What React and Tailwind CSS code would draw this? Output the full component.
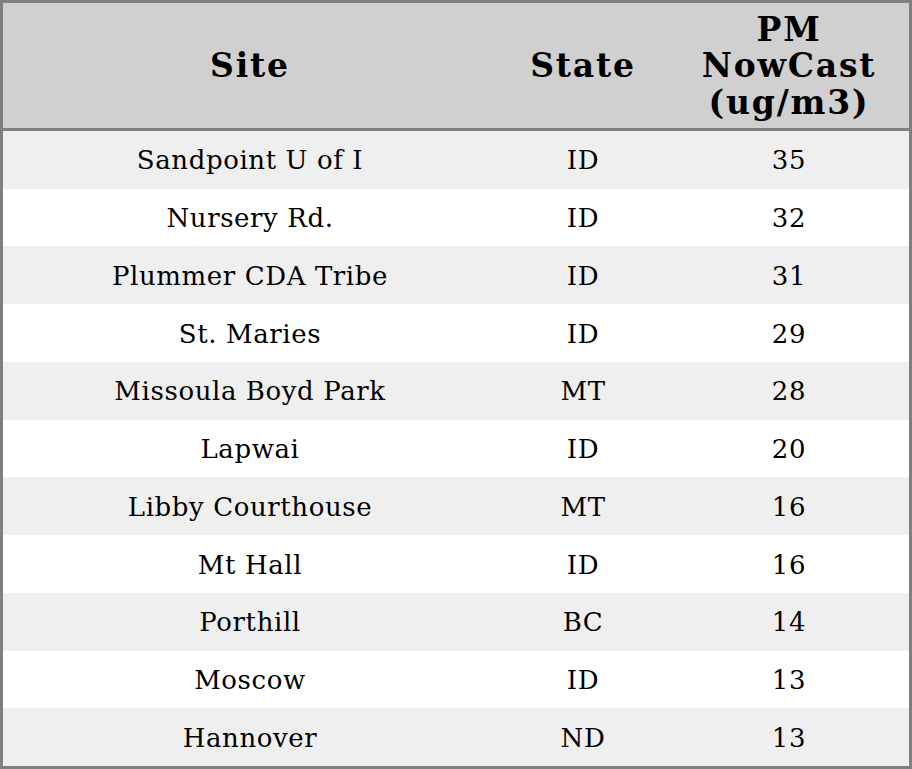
import React from "react";

const rows = [
  ["Sandpoint U of I", "ID", "35"],
  ["Nursery Rd.", "ID", "32"],
  ["Plummer CDA Tribe", "ID", "31"],
  ["St. Maries", "ID", "29"],
  ["Missoula Boyd Park", "MT", "28"],
  ["Lapwai", "ID", "20"],
  ["Libby Courthouse", "MT", "16"],
  ["Mt Hall", "ID", "16"],
  ["Porthill", "BC", "14"],
  ["Moscow", "ID", "13"],
  ["Hannover", "ND", "13"],
];

export default function App() {
  return (
    <div
      className="w-[912px] h-[769px] border-[3px] border-[#808080] bg-white text-black flex flex-col"
      style={{ fontFamily: '"DejaVu Serif", serif' }}
    >
      <div className="grid grid-cols-[494px_172px_240px] h-[128px] bg-[#d0d0d0] border-b-[3px] border-[#808080] font-bold text-[33px] leading-[36.5px] tracking-[1.8px] shrink-0">
        <div className="flex items-center justify-center text-center pt-[2px]">Site</div>
        <div className="flex items-center justify-center text-center pt-[2px]">State</div>
        <div className="flex items-center justify-center text-center pt-[2px]">
          PM
          <br />
          NowCast
          <br />
          (ug/m3)
        </div>
      </div>
      <div className="flex flex-col flex-1">
        {rows.map((r, i) => (
          <div
            key={i}
            className={`grid grid-cols-[494px_172px_240px] flex-1 text-[26px] tracking-[0.6px] items-center pt-[2px] ${
              i % 2 === 0 ? "bg-[#efefef]" : "bg-white"
            }`}
          >
            <div className="text-center">{r[0]}</div>
            <div className="text-center">{r[1]}</div>
            <div className="text-center">{r[2]}</div>
          </div>
        ))}
      </div>
    </div>
  );
}
